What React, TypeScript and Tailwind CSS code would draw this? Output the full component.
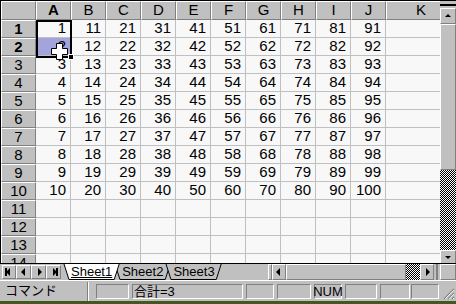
import React from 'react';

const cols = ['A', 'B', 'C', 'D', 'E', 'F', 'G', 'H', 'I', 'J'];
const rows = Array.from({ length: 14 }, (_, i) => i + 1);

const raised = 'border border-t-white border-l-white border-b-[#808080] border-r-[#808080]';
const sunken = 'border border-t-[#808080] border-l-[#808080] border-b-white border-r-white';

const Arrow: React.FC<{ dir: 'up' | 'down' | 'left' | 'right'; bar?: 'left' | 'right' }> = ({ dir, bar }) => {
  const pts = {
    up: '1,5 4,2 7,5',
    down: '1,2 4,5 7,2',
    left: '5,0 5,8 1,4',
    right: '3,0 3,8 7,4',
  }[dir];
  return (
    <svg width="8" height="8" viewBox="0 0 8 8">
      <polygon points={pts} fill="#000" />
      {bar === 'left' && <rect x="0" y="0" width="2" height="8" fill="#000" />}
      {bar === 'right' && <rect x="6" y="0" width="2" height="8" fill="#000" />}
    </svg>
  );
};

const Btn: React.FC<{ className?: string; children?: React.ReactNode }> = ({ className = '', children }) => (
  <div className={`${raised} bg-[#c0c0c0] flex items-center justify-center shrink-0 ${className}`}>{children}</div>
);

const Checker: React.FC<{ className?: string }> = ({ className = '' }) => (
  <div className={`bg-[repeating-conic-gradient(#000_0%_25%,#fff_0%_50%)] bg-[length:2px_2px] shrink-0 ${className}`} />
);

const Cell: React.FC<{ r: number; c: number }> = ({ r, c }) => {
  const v = r <= 10 ? (c - 1) * 10 + r : '';
  const sel = r === 2 && c === 1;
  return (
    <div
      className={`w-[35px] h-[18px] shrink-0 border-r border-b border-[#c0c0c0] flex items-center justify-end pr-[4px] ${
        sel ? 'bg-[#a4a4dc]' : 'bg-[#f8f8f8]'
      }`}
    >
      {v}
    </div>
  );
};

const Grid: React.FC = () => (
  <div className="relative w-[440px] h-[262px] overflow-hidden border-l border-black bg-[#f8f8f8] text-[15px] text-black">
    {/* column headers */}
    <div className="flex h-[19px]">
      <div className={`w-[35px] shrink-0 bg-[#c0c0c0] ${raised}`} />
      {cols.map((c) => (
        <div
          key={c}
          className={`w-[35px] shrink-0 bg-[#c0c0c0] ${raised} border-r-[#404040] flex items-center justify-center ${
            c === 'A' ? 'font-bold' : ''
          }`}
        >
          {c}
        </div>
      ))}
      <div className={`w-[70px] shrink-0 bg-[#c0c0c0] ${raised} flex items-center justify-center`}>K</div>
    </div>
    {rows.map((r) => (
      <div key={r} className="flex h-[18px]">
        <div
          className={`w-[35px] shrink-0 bg-[#c0c0c0] ${raised} border-b-[#404040] flex items-center justify-center ${
            r <= 2 ? 'font-bold' : ''
          }`}
        >
          {r}
        </div>
        {cols.map((c, i) => (
          <Cell key={c} r={r} c={i + 1} />
        ))}
        <div className="w-[70px] h-[18px] shrink-0 border-b border-[#c0c0c0]" />
      </div>
    ))}

    {/* selection A1:A2 */}
    <div className="absolute left-[35px] top-[19px] w-[36px] h-[38px] border-2 border-black pointer-events-none" />
    <div className="absolute left-[67px] top-[53px] w-[6px] h-[6px] bg-black border border-white" />
    {/* fat cross cursor */}
    <svg className="absolute left-[50px] top-[42px]" width="17" height="17" viewBox="0 0 17 17">
      <polygon
        points="5.5,0.5 11.5,0.5 11.5,5.5 16.5,5.5 16.5,11.5 11.5,11.5 11.5,16.5 5.5,16.5 5.5,11.5 0.5,11.5 0.5,5.5 5.5,5.5"
        fill="#fff"
        stroke="#000"
      />
    </svg>
  </div>
);

const VScroll: React.FC = () => (
  <div className="w-[16px] h-[262px] flex flex-col bg-[#c0c0c0] overflow-hidden">
    <div className="h-[3px] shrink-0" />
    <div className="h-[2px] bg-black shrink-0" />
    <div className="h-[2px] shrink-0" />
    <Btn className="w-[16px] h-[16px]">
      <Arrow dir="up" />
    </Btn>
    <div className={`w-[16px] h-[146px] shrink-0 bg-[#c0c0c0] ${raised}`} />
    <Checker className="w-[16px] h-[80px]" />
    <Btn className="w-[16px] h-[16px]">
      <Arrow dir="down" />
    </Btn>
  </div>
);

const Tab: React.FC<{ label: string; active?: boolean }> = ({ label, active }) => (
  <div className={`relative h-[16px] flex items-center px-[7px] ${active ? 'z-10' : ''}`}>
    <svg className="absolute inset-0 w-full h-full" preserveAspectRatio="none" viewBox="0 0 100 16">
      <polygon points="0,0 100,0 91,15.5 9,15.5" fill={active ? '#fff' : '#c0c0c0'} stroke="none" />
    </svg>
    <svg className="absolute inset-0 w-full h-full overflow-visible" viewBox="0 0 100 16" preserveAspectRatio="none">
      <polyline points="0,0 9,15.5 91,15.5 100,0" fill="none" stroke="#000" strokeWidth="1" vectorEffect="non-scaling-stroke" />
    </svg>
    <span className={`relative ${active ? 'underline' : ''}`}>{label}</span>
  </div>
);

const TabBar: React.FC = () => (
  <div className="h-[17px] flex items-start bg-[#c0c0c0] border-t border-black text-[13px] text-black">
    <div className="flex items-center h-[16px] pl-[2px] shrink-0">
      <Btn className="w-[14px] h-[14px]">
        <Arrow dir="left" bar="left" />
      </Btn>
      <Btn className="w-[15px] h-[14px]">
        <Arrow dir="left" />
      </Btn>
      <Btn className="w-[15px] h-[14px]">
        <Arrow dir="right" />
      </Btn>
      <Btn className="w-[15px] h-[14px]">
        <Arrow dir="right" bar="right" />
      </Btn>
    </div>
    <div className="flex w-[204px] ml-[3px] shrink-0">
      <Tab label="Sheet1" active />
      <div className="-ml-[4px]">
        <Tab label="Sheet2" />
      </div>
      <div className="-ml-[4px]">
        <Tab label="Sheet3" />
      </div>
    </div>
    <div className="flex h-[16px] items-stretch shrink-0">
      <div className={`w-[4px] ${raised} bg-[#c0c0c0]`} />
      <Btn className="w-[14px]">
        <Arrow dir="left" />
      </Btn>
      <div className={`w-[120px] ${raised} bg-[#c0c0c0]`} />
      <Checker className="w-[14px]" />
      <Btn className="w-[14px]">
        <Arrow dir="right" />
      </Btn>
      <div className="w-[2px]" />
      <div className="w-[2px] bg-[#808080]" />
      <div className="w-[2px]" />
      <div className={`w-[16px] ${raised} bg-[#c0c0c0]`} />
    </div>
  </div>
);

const StatusBar: React.FC = () => (
  <div className="h-[21px] flex items-center bg-[#c0c0c0] border-t border-white text-[13px] text-black">
    <div className="w-[87px] pl-[5px]">コマンド</div>
    <div className="w-[2px] h-[19px] border-l border-[#808080] border-r border-r-white" />
    <div className="w-[7px]" />
    <div className={`w-[33px] h-[15px] ${sunken}`} />
    <div className={`w-[111px] h-[15px] ml-[3px] ${sunken} flex items-center pl-[1px] leading-none`}>合計=3</div>
    <div className={`w-[28px] h-[15px] ml-[3px] ${sunken}`} />
    <div className={`w-[34px] h-[15px] ml-[3px] ${sunken}`} />
    <div className={`w-[28px] h-[15px] ml-[3px] ${sunken} flex items-center justify-center leading-none`}>NUM</div>
    <div className={`w-[32px] h-[15px] ml-[3px] ${sunken}`} />
    <div className={`w-[30px] h-[15px] ml-[3px] ${sunken}`} />
    <div className={`w-[28px] h-[15px] ml-[1px] ${sunken}`} />
    <div className="flex-1 h-full flex items-end justify-end pr-[1px] pb-[1px]">
      <svg width="12" height="12" viewBox="0 0 12 12">
        <path d="M11 1L1 11M11 5L5 11M11 9L9 11" stroke="#808080" strokeWidth="1.2" />
        <path d="M11 2L2 11M11 6L6 11M11 10L10 11" stroke="#fff" strokeWidth="0.8" />
      </svg>
    </div>
  </div>
);

const App: React.FC = () => {
  return (
    <div className="w-[456px] h-[304px] overflow-hidden bg-[#c0c0c0] font-['Liberation_Sans','Noto_Sans_CJK_JP',sans-serif] flex flex-col">
      <div className="h-[1px] bg-black shrink-0" />
      <div className="flex shrink-0">
        <Grid />
        <VScroll />
      </div>
      <TabBar />
      <StatusBar />
      <div className="h-[3px] bg-[#42581e] shrink-0" />
    </div>
  );
};

export default App;
